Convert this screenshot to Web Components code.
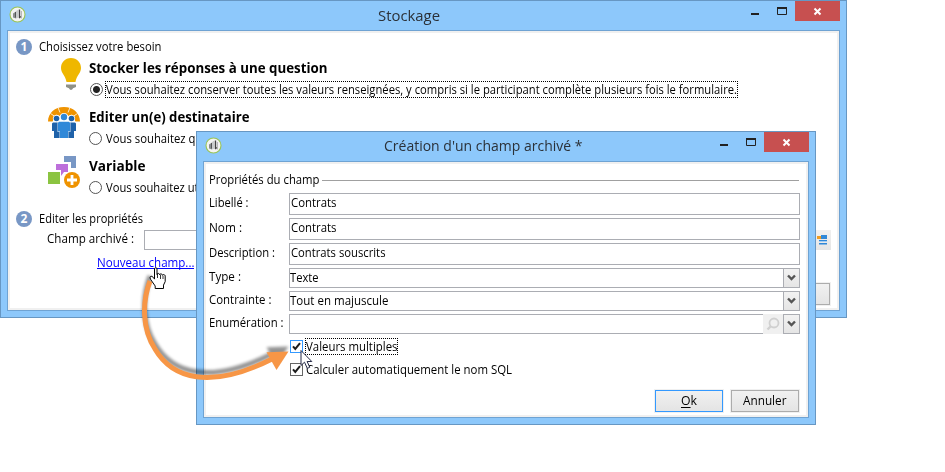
<!DOCTYPE html>
<html lang="fr">
<head>
<meta charset="utf-8">
<title>Stockage</title>
<style>
body{margin:0;width:945px;height:472px;overflow:hidden;background:#fff;position:relative;font:12px/16px "Open Sans","Noto Sans",sans-serif;color:#000}
</style>
</head>
<body>
<storage-window></storage-window>
<field-window></field-window>
<drag-arrow></drag-arrow>
<script>
function element(name, html, setup) {
  const template = document.createElement('template');
  template.innerHTML = html;
  customElements.define(name, class extends HTMLElement {
    connectedCallback() {
      if (this.shadowRoot) return;
      this.attachShadow({mode: 'open'}).append(template.content.cloneNode(true));
      if (setup) setup(this, this.shadowRoot);
    }
  });
}

element('app-window', `
<style>
:host{position:absolute;display:flex;flex-direction:column;box-sizing:border-box;border:1px solid #6797c3;background:#8dc8fb;padding:0 6px 6px}
header{display:flex;height:29px;flex:none;align-items:flex-start}
.logo{margin:5px 0 0 2px;width:17px;height:17px}
.title{display:flex;flex:1;font-size:15px;line-height:20px;color:#2b3138;padding-top:var(--title-top,4px)}
.ctl{display:block;flex:none}
main{flex:1;border:1px solid #6fa3d3;background:#fff;box-shadow:inset 0 0 0 2px #f0f0f0;padding:2px;display:flex;flex-direction:column;min-height:0}
</style>
<header>
<svg class="logo" viewBox="0 0 17 17"><circle cx="8.500" cy="8.500" r="7.500" fill="#f4f4f2" stroke="#9bc455" stroke-width="1.100"/><path d="M4 7.500l3-2v7l-3-1z" fill="#8a8f8f"/><path d="M7 5l2.500-1.500v8L7 12.500z" fill="#c9cccc"/><path d="M6.500 6v5.500" stroke="#555"/><path d="M10.500 3.500v8M12 10.500l-2 1.500" stroke="#444" stroke-width="1.300"/><path d="M12.300 5v7.500" stroke="#aaa"/></svg>
<div class="title"><slot name="title"></slot></div>
<svg class="ctl" width="89" height="20"><path d="M0 12h8v2H0z" fill="#222"/><path d="M26.500 7.500h9v6h-9z" fill="none" stroke="#222"/><path d="M26 6h10v2H26z" fill="#222"/><path d="M44 0h45v20H44z" fill="#c75050"/><path d="M63.500 7.500l6 6M69.500 7.500l-6 6" stroke="#fff" stroke-width="2"/></svg>
</header>
<main><slot></slot></main>`);

element('step-head', `
<style>
:host{display:flex;height:16px;padding-left:6px;gap:7px;line-height:18px}
.n{width:16px;height:16px;margin-top:1px;border-radius:50%;background:#7897c5;color:#fff;font-weight:700;font-size:12px;line-height:16px;text-align:center}
</style><span class="n"><slot name="n"></slot></span><slot></slot>`);

element('radio-option', `
<style>
:host{display:grid;grid-template-columns:79px auto;height:39px;margin-bottom:10px}
.icon{padding-left:38px;margin-top:-1px;height:32px}
.head{height:18px;font-size:13.300px;font-weight:700;line-height:18px}
.row{display:flex;margin-top:4px;height:17px}
.dot{width:11px;height:11px;border:1px solid #555;border-radius:50%;margin:2px 3px 0 0;background:#fff;flex:none}
:host([checked]) .dot{background:radial-gradient(circle,#222 0 3px,#fff 4px);margin:2px 2px 0 1px}
.text{line-height:15px;border:1px solid transparent;box-sizing:border-box;height:17px;white-space:nowrap}
:host([checked]) .text{border:1px dotted #000;width:633px}
</style>
<div class="icon"><slot name="icon"></slot></div>
<div><div class="head"><slot name="head"></slot></div><div class="row"><span class="dot"></span><span class="text"><slot></slot></span></div></div>`);

element('text-field', `
<style>
:host{display:flex;box-sizing:border-box;border:1px solid #abadb3;background:#fff;padding-left:1px;line-height:18px}
</style><slot></slot>`);

element('drop-field', `
<style>
:host{display:flex;box-sizing:border-box;border:1px solid #abadb3;background:#fff;height:20px;line-height:18px}
.v{flex:1}
.search{display:none;width:20px;height:20px;margin:-1px 0;background:#f0f0f0}
:host([search]) .search{display:block}
.b{box-sizing:border-box;width:16px;height:18px;border-left:1px solid #abadb3;background:linear-gradient(#f2f2f2,#e5e5e5)}
svg{display:block}
</style><span class="v"><slot></slot></span>
<span class="search"><svg width="20" height="20"><circle cx="11" cy="9" r="4.500" fill="none" stroke="#d0d0d0" stroke-width="1.800"/><path d="M8 12l-3.500 3.500" stroke="#d0d0d0" stroke-width="2.400"/></svg></span>
<span class="b"><svg width="15" height="18"><path d="M4 6.500L7.500 10 11 6.500" fill="none" stroke="#555" stroke-width="2.400"/></svg></span>`);

element('check-option', `
<style>
:host{display:flex;height:17px}
.box{box-sizing:border-box;width:13px;height:13px;margin:2px 2px 0 0;border:1px solid #666;background:#fff;flex:none}
:host([focused]) .box{border-color:#3399ff}
.t{box-sizing:border-box;height:17px;line-height:15px;border:1px solid transparent;white-space:nowrap}
:host([focused]) .t{border:1px dotted #000;width:93px}
svg{display:block}
</style><span class="box"><svg width="11" height="11"><path d="M2 5.300L4.300 8 9 2.200" fill="none" stroke="#1d1d1d" stroke-width="2"/></svg></span><span class="t"><slot></slot></span>`);

element('push-button', `
<style>
:host{display:flex;justify-content:center;box-sizing:border-box;width:68px;height:22px;border:1px solid #acacac;box-shadow:0 0 0 1px #f0f0f0;background:linear-gradient(#f1f1f1,#e4e4e4);padding-top:2px}
:host([primary]){border-color:#3399ff}
</style><slot></slot>`);

element('storage-window', `
<style>
app-window{left:0;top:0;width:847px;height:318px}
.s1{margin:5px 0}
.s2{margin-top:4px}
.line{display:flex;height:20px;margin-top:4px;padding:0 6px 0 37px;line-height:18px}
.line text-field{margin-left:10px;width:660px}
.tool{margin-left:auto;width:20px;height:20px;background:linear-gradient(#f0f0f0,#e6e6e6)}
.link{margin:4px 0 0 87px;color:#00f;width:97px;height:14px;border-bottom:1px solid #00f;line-height:18px}
.foot{display:flex;justify-content:flex-end;padding:14px 7px 0 0}
svg{display:block}
</style>
<app-window>
<fit-text slot="title" w="60.500" style="margin-left:352px">Stockage</fit-text>
<step-head class="s1"><span slot="n">1</span><fit-text w="121">Choisissez votre besoin</fit-text></step-head>
<radio-option checked>
<svg slot="icon" width="40" height="32"><path d="M23 0C17 0 13 4.500 13 10c0 5 4.500 7.500 5.500 14h9C28.500 17.500 33 15 33 10 33 4.500 29 0 23 0z" fill="#efb700"/><path d="M18 26.500h10v2.500l-3 1.200c-1 2.300-3 2.300-4 0L18 29z" fill="#8f9188"/></svg>
<fit-text slot="head" w="237">Stocker les réponses à une question</fit-text>
<fit-text w="629.500">Vous souhaitez conserver toutes les valeurs renseignées, y compris si le participant complète plusieurs fois le formulaire.</fit-text>
</radio-option>
<radio-option>
<svg slot="icon" width="32" height="32"><path d="M0 14.500C0 6 7 0 16 0s16 6 16 14.500h-4.500L24 7.500l-4 1.500c-1-3-7-3-8 0L8 7.500 4.500 14.500z" fill="#ef9300"/><path d="M10 .5l2 5M22 .5l-2 5M2.500 6.500l4.500 3M29.500 6.500l-4.500 3" stroke="#fff" stroke-width=".8"/><circle cx="8.500" cy="11.500" r="3.600" fill="#fff"/><circle cx="23.500" cy="11.500" r="3.600" fill="#fff"/><g fill="#1f62a9"><circle cx="8.500" cy="11.500" r="2.800"/><circle cx="23.500" cy="11.500" r="2.800"/><path d="M5 15.500h8v15.500H6v-7H4v-7.500zM27 15.500h-8v15.500h7v-7h2v-7.500z"/></g><circle cx="16" cy="10" r="4" fill="#fff"/><path d="M10.800 14.300h10.400l1.200 1.200V25h-2v7h-8.800v-7h-2v-9.500z" fill="#fff"/><g fill="#3088d8"><circle cx="16" cy="10" r="3.200"/><path d="M11 14.800h10l1 1v8.700h-2V31h-8v-6.500h-2v-8.700z"/></g></svg>
<fit-text slot="head" w="159">Editer un(e) destinataire</fit-text>
<fit-text w="88">Vous souhaitez q</fit-text>
</radio-option>
<radio-option>
<svg slot="icon" width="32" height="32"><path d="M16 0h12v12h-5V6h-7z" fill="#7897c5"/><path d="M8 8h12v8h-4l-3 4v-6H8z" fill="#bd6fdb"/><path d="M0 16h12v12H0z" fill="#8bc441"/><circle cx="24" cy="24" r="8" fill="#ef9300"/><path d="M24 19v10M19 24h10" stroke="#fff" stroke-width="2.800"/></svg>
<fit-text slot="head" w="55">Variable</fit-text>
<fit-text w="91">Vous souhaitez ut</fit-text>
</radio-option>
<step-head class="s2"><span slot="n">2</span><fit-text w="102.500">Editer les propriétés</fit-text></step-head>
<div class="line"><fit-text w="85.500">Champ archivé :</fit-text><text-field></text-field><span class="tool"><svg width="20" height="20"><path d="M10 5h6v4h-6zM8 13h8v1.500H8zM8 10h8v1H8z" fill="#3088d8"/><path d="M8 11h8v1H8z" fill="#a5cdf2"/><path d="M6 6h4v3H6z" fill="#ef9c22"/></svg></span></div>
<div class="link"><fit-text w="96">Nouveau champ...</fit-text></div>
<div class="foot"><push-button></push-button></div>
</app-window>`);

element('field-window', `
<style>
app-window{left:196px;top:131px;width:620px;height:294px;--title-top:3px}
.group{display:flex;height:16px;line-height:18px;margin:7px 7px 6px 3px}
.group i{flex:1;height:1px;background:#a0a0a0;margin:9px 0 0 2px}
.grid{display:grid;grid-template-columns:80px 511px;grid-template-rows:22px 22px 22px 20px 20px 20px;row-gap:3px;padding-left:3px;line-height:18px}
.grid>.d{margin-top:1px}
.checks{display:flex;flex-direction:column;gap:6px;margin:4px 0 0 84px}
.buttons{display:flex;justify-content:flex-end;gap:8px;margin:12px 7px 0 0}
u{text-underline-offset:2px}
</style>
<app-window>
<fit-text slot="title" w="197" style="margin-left:161.500px">Création d'un champ archivé *</fit-text>
<div class="group"><fit-text w="109">Propriétés du champ</fit-text><i></i></div>
<div class="grid">
<fit-text class="d" w="38">Libellé :</fit-text><text-field><fit-text w="44">Contrats</fit-text></text-field>
<fit-text class="d" w="31.500">Nom :</fit-text><text-field><fit-text w="44">Contrats</fit-text></text-field>
<fit-text class="d" w="64.500">Description :</fit-text><text-field><fit-text w="93">Contrats souscrits</fit-text></text-field>
<fit-text w="30.500">Type :</fit-text><drop-field><fit-text w="27">Texte</fit-text></drop-field>
<fit-text w="61">Contrainte :</fit-text><drop-field><fit-text w="97">Tout en majuscule</fit-text></drop-field>
<fit-text w="73">Enumération :</fit-text><drop-field search></drop-field>
</div>
<div class="checks">
<check-option focused><fit-text w="90">Valeurs multiples</fit-text></check-option>
<check-option><fit-text w="204.500">Calculer automatiquement le nom SQL</fit-text></check-option>
</div>
<div class="buttons"><push-button primary><fit-text w="14.500"><u>O</u>k</fit-text></push-button><push-button><fit-text w="42">Annuler</fit-text></push-button></div>
</app-window>`);

element('drag-arrow', `
<style>:host{position:absolute;left:0;top:0;width:945px;height:472px;pointer-events:none}svg{display:block}</style>
<svg width="945" height="472">
<defs><filter id="b" x="-20%" y="-20%" width="140%" height="140%"><feGaussianBlur stdDeviation="1.500"/></filter>
<g id="a"><path d="M150 281C142 302 142 329 155 349C172 378 209 391 273 358.500" fill="none" stroke-width="5"/><path d="M266.500 352.300L288.500 351.500L276.500 370z" stroke="none"/></g></defs>
<use href="#a" transform="translate(0 -5)" fill="#000" stroke="#000" opacity=".42" filter="url(#b)"/>
<use href="#a" fill="#f79646" stroke="#f79646"/>
<path d="M154.500 269c0-1.800 2.500-1.800 2.500 0v5.500c0-1.500 2.700-1.500 2.700.3 0-1.300 2.700-1.200 2.700.5 0-1 2.800-1 2.800.8v5.500l-1.700 3.500v3.400h-8.300v-2.500l-3.500-5c-2-2.500-2.300-4.500-.5-4.700 1.500 0 2.300 1.500 3.300 2.800z" fill="#fff" stroke="#000"/>
<path d="M157.500 274v4M160.500 275v4M163 276v3" stroke="#000" stroke-width=".8"/>
<path d="M301 350.500v15l3.500-3.300 2.800 6.200 2.500-1.200-2.700-5.700h4.700z" fill="#fff" fill-opacity=".9" stroke="#262b48"/>
</svg>`);

/* Draws its text on one line, scaled horizontally to the width in "w". */
element('fit-text', `
<style>:host{display:block;white-space:nowrap;flex:none}span{display:inline-block;transform-origin:0 0}</style><span><slot></slot></span>`, (host, root) => {
  const span = root.querySelector('span');
  const width = parseFloat(host.getAttribute('w')) + 1.5;
  host.style.width = width + 'px';
  span.style.transform = 'scaleX(' + width / span.getBoundingClientRect().width + ')';
});
</script>
</body>
</html>
